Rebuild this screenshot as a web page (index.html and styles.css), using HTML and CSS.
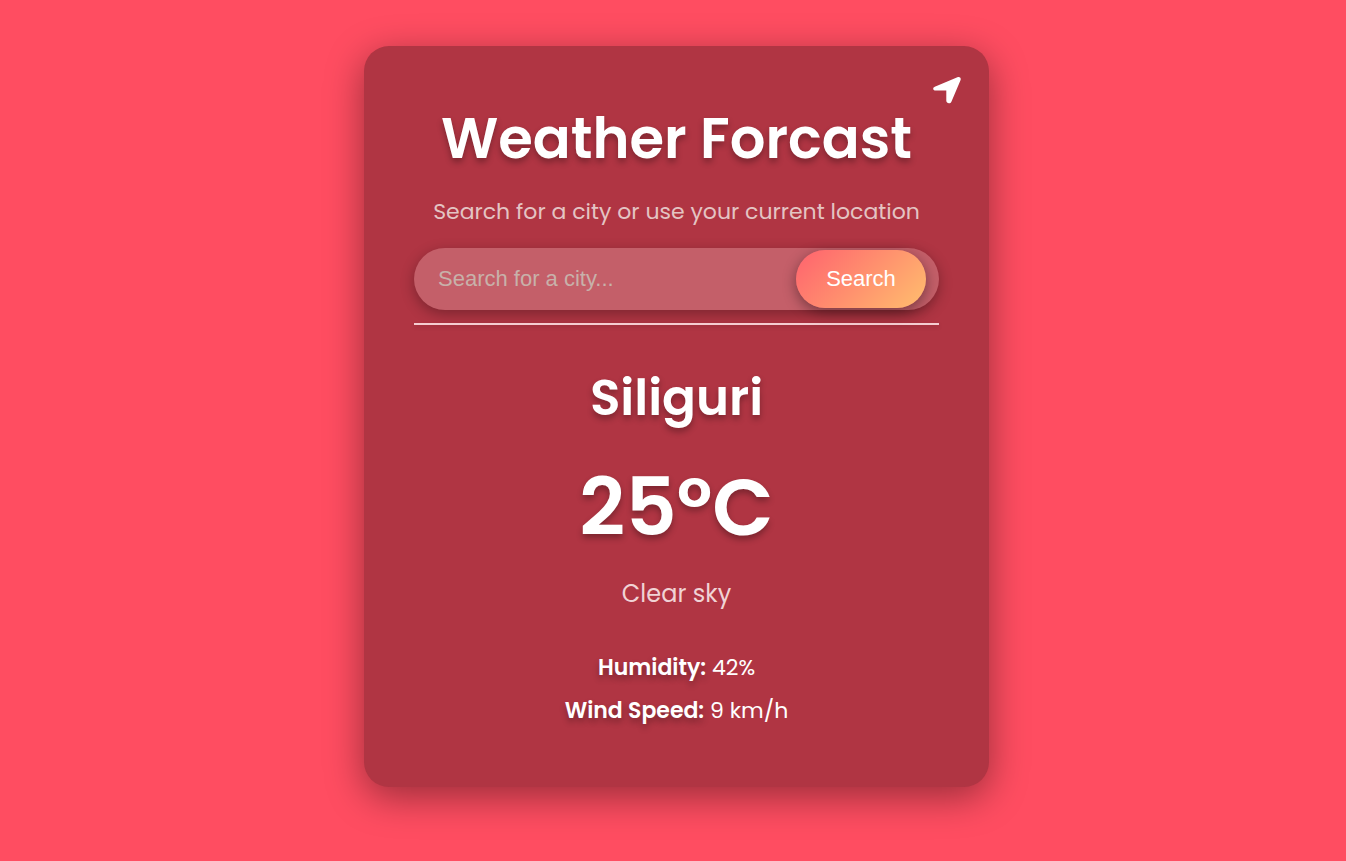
FILE: index.html
```html
<!DOCTYPE html>
<html lang="en">
<head>
<meta charset="utf-8">
<meta name="viewport" content="width=device-width, initial-scale=1">
<title>Weather Forcast</title>
<link rel="stylesheet" href="styles.css">
</head>
<body>
<main class="card">
  <button class="locate" type="button" aria-label="Use current location">
    <svg viewBox="0 0 28 28" aria-hidden="true"><path d="M1.8 10.7 24.4 1.3C26.6.4 28.4 2.1 27.5 4.2L18.4 25.7C17.3 28.3 13.3 27.6 13.3 24.8V14.6H2.8C-.2 14.6-.7 11.7 1.8 10.7Z"/></svg>
  </button>
  <h1 class="title">Weather Forcast</h1>
  <p class="intro">Search for a city or use your current location</p>
  <form class="search">
    <input class="search-input" type="text" placeholder="Search for a city..." aria-label="City">
    <button class="search-button" type="button">Search</button>
  </form>
  <hr class="divider">
  <section class="weather">
    <h2 class="city">Siliguri</h2>
    <p class="temperature">25°C</p>
    <p class="condition">Clear sky</p>
    <p class="detail"><strong>Humidity:</strong> 42%</p>
    <p class="detail"><strong>Wind Speed:</strong> 9 km/h</p>
  </section>
</main>
</body>
</html>
```
FILE: styles.css
```css
* { box-sizing: border-box; }

body {
  margin: 0;
  min-height: 100vh;
  padding: 46px 16px 74px 23px;
  background: #ff4d61;
  color: #fff;
  font-family: Poppins, Inter, sans-serif;
}

.card {
  position: relative;
  max-width: 625px;
  margin: 0 auto;
  padding: 57px 50px 55px;
  border-radius: 25px;
  background: #b03543;
  box-shadow: 0 10px 38px rgba(0, 0, 0, 0.4);
  text-align: center;
}

.locate {
  position: absolute;
  top: 30px;
  right: 28px;
  width: 28px;
  height: 28px;
  padding: 0;
  border: 0;
  background: none;
  color: #fff;
  cursor: pointer;
}

.locate svg { display: block; width: 28px; height: 28px; fill: currentColor; }

.title {
  margin: 0;
  font-size: 56px;
  line-height: 72px;
  font-weight: 600;
  text-shadow: 0 4px 6px rgba(0, 0, 0, 0.3);
}

.intro {
  margin: 20px 0 19px;
  font-size: 22px;
  line-height: 34px;
  color: #e4c4c3;
}

.search {
  display: flex;
  align-items: center;
  height: 62px;
  padding-right: 13px;
  border-radius: 31px;
  background: #c45f69;
  box-shadow: 0 4px 14px rgba(0, 0, 0, 0.3);
}

.search-input {
  flex: 1;
  min-width: 0;
  height: 62px;
  padding: 0 24px;
  border: 0;
  background: none;
  color: #fff;
  font: 22px "Liberation Sans", Arial, sans-serif;
}

.search-input::placeholder { color: #c8b1aa; opacity: 1; }

.search-button {
  width: 130px;
  height: 58px;
  padding: 0;
  border: 0;
  border-radius: 29px;
  background: linear-gradient(135deg, #ff6b6e 10%, #ffb56e 90%);
  box-shadow: 0 4px 14px rgba(0, 0, 0, 0.4);
  color: #fff;
  font: 22px "Liberation Sans", Arial, sans-serif;
  cursor: pointer;
}

.divider {
  height: 2px;
  margin: 13px 0 37px;
  border: 0;
  background: #f5cdd1;
  box-shadow: 0 2px 4px rgba(0, 0, 0, 0.15);
}

.city {
  margin: 0;
  font-size: 50px;
  line-height: 72px;
  font-weight: 600;
  text-shadow: 0 4px 6px rgba(0, 0, 0, 0.3);
}

.temperature {
  margin: 20px 0 16px;
  font-size: 80px;
  line-height: 106px;
  font-weight: 600;
  text-shadow: 0 4px 6px rgba(0, 0, 0, 0.3);
}

.condition {
  margin: 0 0 34px;
  font-size: 24px;
  line-height: 36px;
  color: #f0d3d5;
}

.detail {
  margin: 0;
  padding: 4px 0;
  font-size: 22px;
  line-height: 35px;
}

.detail strong {
  font-weight: 600;
  text-shadow: 0 4px 6px rgba(0, 0, 0, 0.3);
}
```
